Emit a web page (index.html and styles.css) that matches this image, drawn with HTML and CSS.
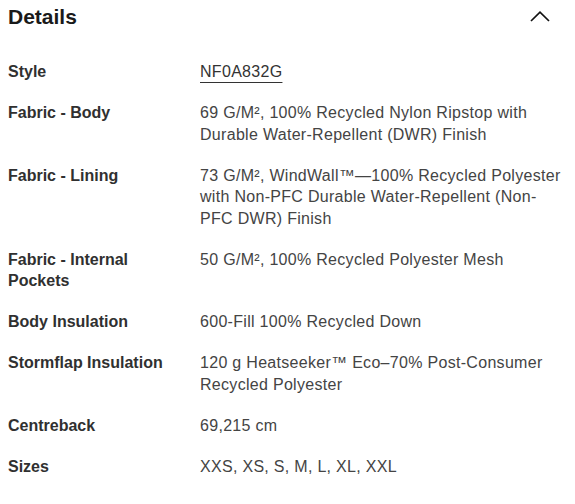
FILE: index.html
```html
<!DOCTYPE html>
<html lang="en">
<head>
<meta charset="utf-8">
<title>Details</title>
<link rel="stylesheet" href="styles.css">
</head>
<body>
<section class="details">
  <header class="details-header">
    <h2 class="details-title">Details</h2>
    <button class="toggle" type="button" aria-label="Collapse details">
      <svg width="20" height="11" viewBox="0 0 20 11" aria-hidden="true">
        <path d="M1 10 L10 1.2 L19 10" fill="none" stroke="#111" stroke-width="1.7" stroke-linejoin="miter"/>
      </svg>
    </button>
  </header>
  <dl class="spec-list">
    <div class="spec-row"><dt>Style</dt><dd><a class="style-link" href="#">NF0A832G</a></dd></div>
    <div class="spec-row"><dt>Fabric - Body</dt><dd>69 G/M², 100% Recycled Nylon Ripstop with Durable Water-Repellent (DWR) Finish</dd></div>
    <div class="spec-row"><dt>Fabric - Lining</dt><dd>73 G/M², WindWall™—100% Recycled Polyester with Non-PFC Durable Water-Repellent (Non-PFC DWR) Finish</dd></div>
    <div class="spec-row"><dt>Fabric - Internal Pockets</dt><dd>50 G/M², 100% Recycled Polyester Mesh</dd></div>
    <div class="spec-row"><dt>Body Insulation</dt><dd>600-Fill 100% Recycled Down</dd></div>
    <div class="spec-row"><dt>Stormflap Insulation</dt><dd>120 g Heatseeker™ Eco–70% Post-Consumer Recycled Polyester</dd></div>
    <div class="spec-row"><dt>Centreback</dt><dd>69,215 cm</dd></div>
    <div class="spec-row"><dt>Sizes</dt><dd>XXS, XS, S, M, L, XL, XXL</dd></div>
  </dl>
</section>
</body>
</html>
```

FILE: styles.css
```css
* { box-sizing: border-box; }

body {
  margin: 0;
  background: #fff;
  font-family: "Liberation Sans", Arial, sans-serif;
  color: #222;
}

.details {
  padding: 0 8px;
}

.details-header {
  display: flex;
  align-items: center;
  justify-content: space-between;
  height: 34px;
  padding-right: 17px;
}

.details-title {
  margin: 0;
  font-size: 21px;
  line-height: 34px;
  font-weight: 700;
  color: #1a1a1a;
}

.toggle {
  display: flex;
  padding: 0;
  margin: 0;
  border: 0;
  background: none;
  margin-top: -1px;
}

.spec-list {
  margin: 27.4px 0 0;
  display: flex;
  flex-direction: column;
  gap: 19.3px;
}

.spec-row {
  display: grid;
  grid-template-columns: 192px 1fr;
  font-size: 16px;
  line-height: 21.6px;
}

.spec-row dt {
  font-weight: 700;
  color: #303030;
  padding-right: 16px;
}

.spec-row dd {
  margin: 0;
  color: #444;
  letter-spacing: 0.3px;
}

.style-link {
  color: #333;
  text-decoration: underline;
  text-underline-offset: 5px;
  text-decoration-thickness: 1px;
}
```
